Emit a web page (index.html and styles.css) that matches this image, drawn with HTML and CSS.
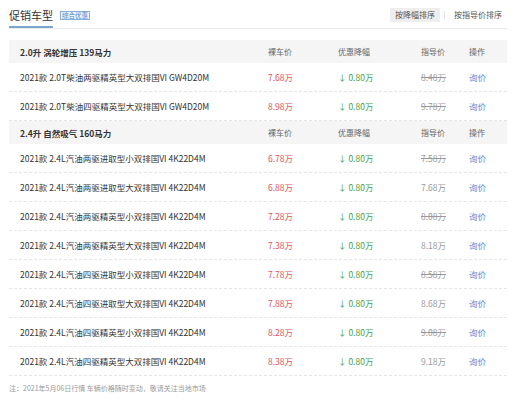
FILE: index.html
```html
<!DOCTYPE html>
<html lang="zh">
<head>
<meta charset="utf-8">
<link rel="stylesheet" href="styles.css">
</head>
<body>
<div class="page">
  <div class="top">
    <div class="title-wrap">
      <span class="title">促销车型</span>
      <span class="tag">综合优惠</span>
    </div>
    <div class="sorts">
      <span class="sort active">按降幅排序</span>
      <span class="divider"></span>
      <span class="sort">按指导价排序</span>
    </div>
  </div>

  <div class="group first">
    <div class="row head">
      <span class="name">2.0升 涡轮增压 139马力</span>
      <span>裸车价</span><span>优惠降幅</span><span>指导价</span><span>操作</span>
    </div>
    <div class="row"><span class="name">2021款 2.0T柴油两驱精英型大双排国VI GW4D20M</span><span class="price">7.68万</span><span class="down">↓ 0.80万</span><span class="guide strike">8.48万</span><span class="op">询价</span></div>
    <div class="row"><span class="name">2021款 2.0T柴油四驱精英型大双排国VI GW4D20M</span><span class="price">8.98万</span><span class="down">↓ 0.80万</span><span class="guide strike">9.78万</span><span class="op">询价</span></div>
  </div>

  <div class="group">
    <div class="row head">
      <span class="name">2.4升 自然吸气 160马力</span>
      <span>裸车价</span><span>优惠降幅</span><span>指导价</span><span>操作</span>
    </div>
    <div class="row"><span class="name">2021款 2.4L汽油两驱进取型小双排国VI 4K22D4M</span><span class="price">6.78万</span><span class="down">↓ 0.80万</span><span class="guide strike">7.58万</span><span class="op">询价</span></div>
    <div class="row"><span class="name">2021款 2.4L汽油两驱进取型大双排国VI 4K22D4M</span><span class="price">6.88万</span><span class="down">↓ 0.80万</span><span class="guide">7.68万</span><span class="op">询价</span></div>
    <div class="row"><span class="name">2021款 2.4L汽油两驱精英型小双排国VI 4K22D4M</span><span class="price">7.28万</span><span class="down">↓ 0.80万</span><span class="guide strike">8.08万</span><span class="op">询价</span></div>
    <div class="row"><span class="name">2021款 2.4L汽油两驱精英型大双排国VI 4K22D4M</span><span class="price">7.38万</span><span class="down">↓ 0.80万</span><span class="guide">8.18万</span><span class="op">询价</span></div>
    <div class="row"><span class="name">2021款 2.4L汽油四驱进取型小双排国VI 4K22D4M</span><span class="price">7.78万</span><span class="down">↓ 0.80万</span><span class="guide strike">8.58万</span><span class="op">询价</span></div>
    <div class="row"><span class="name">2021款 2.4L汽油四驱进取型大双排国VI 4K22D4M</span><span class="price">7.88万</span><span class="down">↓ 0.80万</span><span class="guide">8.68万</span><span class="op">询价</span></div>
    <div class="row"><span class="name">2021款 2.4L汽油四驱精英型小双排国VI 4K22D4M</span><span class="price">8.28万</span><span class="down">↓ 0.80万</span><span class="guide strike">9.08万</span><span class="op">询价</span></div>
    <div class="row"><span class="name">2021款 2.4L汽油四驱精英型大双排国VI 4K22D4M</span><span class="price">8.38万</span><span class="down">↓ 0.80万</span><span class="guide">9.18万</span><span class="op">询价</span></div>
  </div>

  <p class="note">注：2021年5月06日行情 车辆价格随时变动，敬请关注当地市场</p>
</div>
</body>
</html>
```

FILE: styles.css
```css
html, body {
  margin: 0;
  padding: 0;
  background: #fff;
}
body {
  font-family: "Noto Sans CJK SC", "Noto Sans", sans-serif;
  color: #333;
}
.page {
  padding: 0 9px;
}
.top {
  display: flex;
  justify-content: space-between;
  align-items: flex-start;
  border-bottom: 1px solid #ececec;
  height: 28px;
}
.title-wrap {
  display: flex;
  align-items: center;
  height: 28px;
}
.title {
  font-size: 11px;
  color: #333;
  height: 28px;
  box-sizing: border-box;
  border-bottom: 2px solid #7ba6d2;
  display: flex;
  align-items: center;
  padding-top: 3px;
}
.tag {
  margin-left: 7px;
  margin-top: 3px;
  font-size: 6.5px;
  line-height: 7px;
  color: #4a86c8;
  border: 1px solid #86afdc;
  background: #eef4fb;
  padding: 0 1px;
}
.sorts {
  display: flex;
  align-items: center;
  padding-top: 8px;
}
.sort {
  font-size: 8px;
  line-height: 14px;
  height: 14px;
  padding: 0 5px;
  color: #555;
}
.sort.active {
  background: #eeeeee;
}
.divider {
  width: 1px;
  height: 8px;
  background: #e2e2e2;
  margin: 0 4px;
}
.group.first {
  margin-top: 11px;
}
.row {
  display: grid;
  grid-template-columns: 248px 70px 83px 48px 1fr;
  align-items: center;
  height: 28px;
  padding-left: 11px;
  font-size: 8.5px;
  border-bottom: 1px dashed #e6e6e6;
  color: #333;
}
.row.head {
  height: 23px;
  background: #f5f5f5;
  border-bottom: none;
  color: #666;
  font-size: 8px;
}
.row.head .name {
  font-weight: bold;
  color: #333;
  font-size: 8.5px;
}
.price {
  color: #e0535a;
}
.down {
  color: #3f9f3f;
}
.guide {
  color: #999;
}
.guide.strike {
  text-decoration: line-through;
}
.op {
  color: #5b8dd6;
}
.note {
  margin: 7px 0 0;
  font-size: 7px;
  color: #999;
}
```
